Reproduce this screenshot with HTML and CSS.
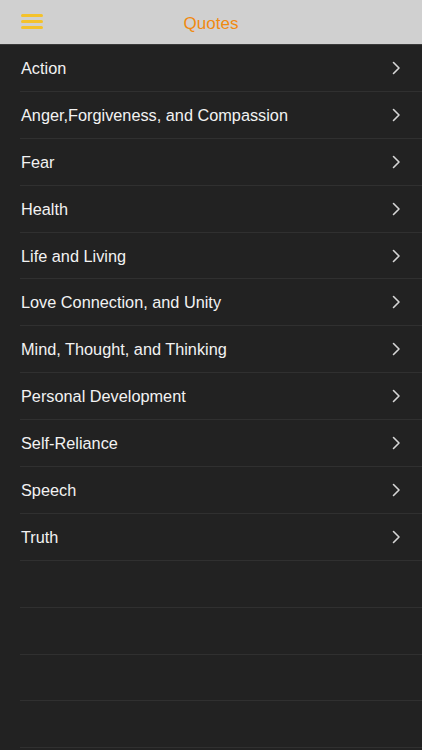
FILE: index.html
```html
<!DOCTYPE html>
<html>
<head>
<meta charset="utf-8">
<link rel="stylesheet" href="styles.css">
</head>
<body>
<div class="app">
  <header class="bar">
    <svg class="menu" width="22" height="16" viewBox="0 0 22 16">
      <rect x="0" y="0" width="22" height="3" rx="1.5" fill="#f4c22b"/>
      <rect x="0" y="6" width="22" height="3" rx="1.5" fill="#f4c22b"/>
      <rect x="0" y="12" width="22" height="3" rx="1.5" fill="#f4c22b"/>
    </svg>
    <div class="title">Quotes</div>
  </header>
  <ul class="list">
    <li class="row"><span>Action</span><svg class="chev" width="9" height="14" viewBox="0 0 9 14"><path d="M1.5 1.5 L7 7 L1.5 12.5" fill="none" stroke="#d6d6d6" stroke-width="1.6" stroke-linecap="round" stroke-linejoin="round"/></svg></li>
    <li class="row"><span>Anger,Forgiveness, and Compassion</span><svg class="chev" width="9" height="14" viewBox="0 0 9 14"><path d="M1.5 1.5 L7 7 L1.5 12.5" fill="none" stroke="#d6d6d6" stroke-width="1.6" stroke-linecap="round" stroke-linejoin="round"/></svg></li>
    <li class="row"><span>Fear</span><svg class="chev" width="9" height="14" viewBox="0 0 9 14"><path d="M1.5 1.5 L7 7 L1.5 12.5" fill="none" stroke="#d6d6d6" stroke-width="1.6" stroke-linecap="round" stroke-linejoin="round"/></svg></li>
    <li class="row"><span>Health</span><svg class="chev" width="9" height="14" viewBox="0 0 9 14"><path d="M1.5 1.5 L7 7 L1.5 12.5" fill="none" stroke="#d6d6d6" stroke-width="1.6" stroke-linecap="round" stroke-linejoin="round"/></svg></li>
    <li class="row"><span>Life and Living</span><svg class="chev" width="9" height="14" viewBox="0 0 9 14"><path d="M1.5 1.5 L7 7 L1.5 12.5" fill="none" stroke="#d6d6d6" stroke-width="1.6" stroke-linecap="round" stroke-linejoin="round"/></svg></li>
    <li class="row"><span>Love Connection, and Unity</span><svg class="chev" width="9" height="14" viewBox="0 0 9 14"><path d="M1.5 1.5 L7 7 L1.5 12.5" fill="none" stroke="#d6d6d6" stroke-width="1.6" stroke-linecap="round" stroke-linejoin="round"/></svg></li>
    <li class="row"><span>Mind, Thought, and Thinking</span><svg class="chev" width="9" height="14" viewBox="0 0 9 14"><path d="M1.5 1.5 L7 7 L1.5 12.5" fill="none" stroke="#d6d6d6" stroke-width="1.6" stroke-linecap="round" stroke-linejoin="round"/></svg></li>
    <li class="row"><span>Personal Development</span><svg class="chev" width="9" height="14" viewBox="0 0 9 14"><path d="M1.5 1.5 L7 7 L1.5 12.5" fill="none" stroke="#d6d6d6" stroke-width="1.6" stroke-linecap="round" stroke-linejoin="round"/></svg></li>
    <li class="row"><span>Self-Reliance</span><svg class="chev" width="9" height="14" viewBox="0 0 9 14"><path d="M1.5 1.5 L7 7 L1.5 12.5" fill="none" stroke="#d6d6d6" stroke-width="1.6" stroke-linecap="round" stroke-linejoin="round"/></svg></li>
    <li class="row"><span>Speech</span><svg class="chev" width="9" height="14" viewBox="0 0 9 14"><path d="M1.5 1.5 L7 7 L1.5 12.5" fill="none" stroke="#d6d6d6" stroke-width="1.6" stroke-linecap="round" stroke-linejoin="round"/></svg></li>
    <li class="row"><span>Truth</span><svg class="chev" width="9" height="14" viewBox="0 0 9 14"><path d="M1.5 1.5 L7 7 L1.5 12.5" fill="none" stroke="#d6d6d6" stroke-width="1.6" stroke-linecap="round" stroke-linejoin="round"/></svg></li>
    <li class="row empty"></li>
    <li class="row empty"></li>
    <li class="row empty"></li>
    <li class="row empty"></li>
  </ul>
</div>
</body>
</html>
```
FILE: styles.css
```css
html, body {
  margin: 0;
  padding: 0;
  background: #222222;
}
.app {
  width: 422px;
  height: 750px;
  overflow: hidden;
  background: #222222;
  font-family: "Liberation Sans", Arial, sans-serif;
}
.bar {
  height: 44px;
  background: #d0d0d0;
  border-bottom: 1px solid #3a3a3a;
  display: flex;
  align-items: center;
  justify-content: center;
  position: relative;
}
.menu {
  position: absolute;
  left: 21px;
  top: 14px;
}
.title {
  font-size: 17px;
  color: #f08a10;
  margin-top: 3px;
}
.list {
  list-style: none;
  margin: 0;
  padding: 0 0 0 20px;
}
.row {
  height: 46.9px;
  box-sizing: border-box;
  border-bottom: 1px solid #303030;
  display: flex;
  align-items: center;
  justify-content: space-between;
  padding: 0 21px 0 1px;
  color: #f2f2f2;
  font-size: 16.3px;
}
.row span {
  padding-top: 1px;
}
.chev {
  display: block;
}
```
